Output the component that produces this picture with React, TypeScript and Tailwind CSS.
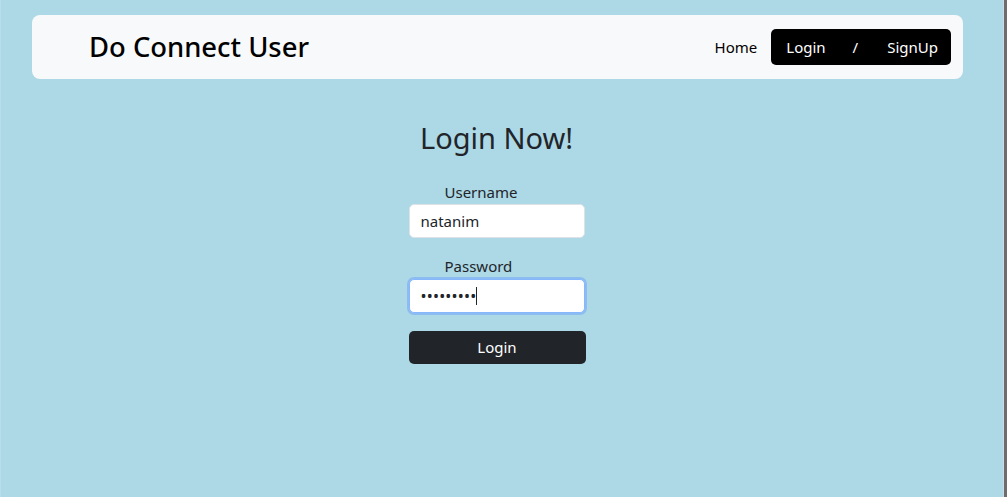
import React from "react";

const font = { fontFamily: '"Noto Sans", "Open Sans", Arial, sans-serif' };

const Navbar: React.FC = () => {
  return (
    <nav className="mt-[15px] ml-[31px] mr-[40px] h-[64px] rounded-lg bg-[#f8f9fa] flex items-center justify-between pl-[57px] pr-[12px]">
      {/* Brand */}
      <span className="text-[27.4px] font-medium text-[#000] leading-none">Do Connect User</span>

      {/* Links */}
      <div className="flex items-center gap-[14px]">
        <a className="text-[15px] text-[#000]">Home</a>
        <div className="flex items-center h-[36px] rounded-[5px] bg-black text-white text-[15px] pl-[15px] pr-[13px]">
          <a>Login</a>
          <span className="ml-[27px] mr-[29px]">/</span>
          <a>SignUp</a>
        </div>
      </div>
    </nav>
  );
};

const LoginForm: React.FC = () => {
  return (
    <div className="flex justify-center pr-[11px] mt-[40px]">
      <div className="w-[176px] flex flex-col items-stretch">
        <h2 className="text-[29px] text-[#212529] text-center leading-[38px] whitespace-nowrap -mx-10">
          Login Now!
        </h2>

        {/* Username */}
        <label className="mt-[23px] pl-[36px] text-[15px] leading-[24px] text-[#212529]">
          Username
        </label>
        <input
          type="text"
          defaultValue="natanim"
          className="h-[34px] w-full rounded-[5px] border border-[#dee2e6] bg-white px-[11px] text-[15px] text-[#212529] outline-none"
          style={font}
        />

        {/* Password */}
        <label className="mt-[16px] pl-[36px] text-[15px] leading-[24px] text-[#212529]">
          Password
        </label>
        <div className="mt-[1px] h-[34px] w-full rounded-[5px] border border-[#86b7fe] bg-white px-[11px] flex items-center shadow-[0_0_0_2px_#8dbdf0]">
          <span className="text-[16px] tracking-[0.2px] text-[#212529]">•••••••••</span>
          <span className="w-px h-[18px] bg-[#212529]" />
        </div>

        <button className="mt-[18px] h-[33px] w-[177px] rounded-[5px] bg-[#212529] text-white text-[15px]">
          Login
        </button>
      </div>
    </div>
  );
};

export default function App() {
  return (
    <div className="w-[1007px] h-[497px] flex" style={font}>
      <div className="flex-1 bg-[#add8e6] border-l border-l-[#b9dde9]">
        <Navbar />
        <LoginForm />
      </div>
      <div className="w-[4px] bg-[#6d6d6d] border-l border-l-[#c8dde4]" />
    </div>
  );
}
